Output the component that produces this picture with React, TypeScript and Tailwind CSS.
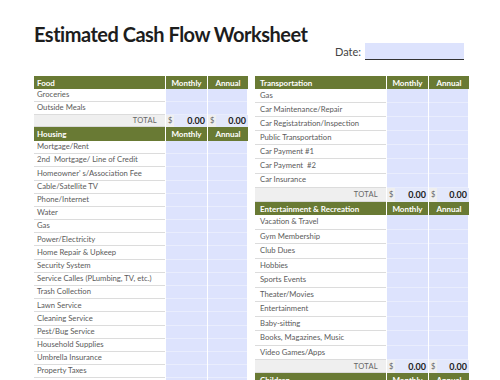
import React from "react";

type Row = { label?: string; total?: boolean; h: number };
type Section = { title: string; h: number; rows: Row[] };

const GREEN = "bg-[#697a34]";

const leftSections: Section[] = [
  {
    title: "Food",
    h: 13,
    rows: [
      { label: "Groceries", h: 13 },
      { label: "Outside Meals", h: 12.6 },
      { total: true, h: 12.8 },
    ],
  },
  {
    title: "Housing",
    h: 13.6,
    rows: [
      "Mortgage/Rent",
      "2nd  Mortgage/ Line of Credit",
      "Homeowner' s/Association Fee",
      "Cable/Satellite TV",
      "Phone/Internet",
      "Water",
      "Gas",
      "Power/Electricity",
      "Home Repair & Upkeep",
      "Security System",
      "Service Calles (PLumbing, TV, etc.)",
      "Trash Collection",
      "Lawn Service",
      "Cleaning Service",
      "Pest/Bug Service",
      "Household Supplies",
      "Umbrella Insurance",
      "Property Taxes",
      "",
    ].map((label) => ({ label, h: 13.2 })),
  },
];

const rightSections: Section[] = [
  {
    title: "Transportation",
    h: 13,
    rows: [
      ...[
        "Gas",
        "Car Maintenance/Repair",
        "Car Registatration/Inspection",
        "Public Transportation",
        "Car Payment #1",
        "Car Payment  #2",
        "Car Insurance",
      ].map((label) => ({ label, h: 14.1 })),
      { total: true, h: 14 },
    ],
  },
  {
    title: "Entertainment & Recreation",
    h: 13.8,
    rows: [
      ...[
        "Vacation & Travel",
        "Gym Membership",
        "Club Dues",
        "Hobbies",
        "Sports Events",
        "Theater/Movies",
        "Entertainment",
        "Baby-sitting",
        "Books, Magazines, Music",
        "Video Games/Apps",
      ].map((label) => ({ label, h: 14.5 })),
      { total: true, h: 13 },
    ],
  },
  { title: "Children", h: 14, rows: [] },
];

function TotalCell({ wide }: { wide: boolean }) {
  return (
    <div className={`${wide ? "w-[41px]" : "w-[40px]"} ml-[1px] flex items-center bg-[#efefef] h-full`}>
      <span className="pl-[2px] pr-[2px] text-[7.5px] text-[#666]">$</span>
      <span className="flex-1 h-full flex items-center justify-end pr-[2px] bg-[#e3e8fb] text-[9px] font-bold text-[#222]">
        0.00
      </span>
    </div>
  );
}

function Table({ sections, pad }: { sections: Section[]; pad: string }) {
  return (
    <div className="w-[214px] flex flex-col">
      {sections.map((s) => (
        <div key={s.title} className="flex flex-col">
          <div className="flex text-[8px] font-bold text-white" style={{ height: s.h }}>
            <div className={`w-[131px] ${GREEN} ${pad} flex items-center`}>{s.title}</div>
            <div className={`w-[41px] ml-[1px] ${GREEN} flex items-center justify-center`}>Monthly</div>
            <div className={`w-[40px] ml-[1px] ${GREEN} flex items-center justify-center`}>Annual</div>
          </div>
          {s.rows.map((r, i) =>
            r.total ? (
              <div key={i} className="flex" style={{ height: r.h }}>
                <div className="w-[131px] bg-[#efefef] border-b border-[#d9d9d9] flex items-center justify-end pr-[8px] text-[7.5px] tracking-[0.3px] text-[#666]">
                  TOTAL
                </div>
                <TotalCell wide />
                <TotalCell wide={false} />
              </div>
            ) : (
              <div key={i} className="flex" style={{ height: r.h }}>
                <div className={`w-[131px] border-b border-[#dcdcdc] ${pad} flex items-center whitespace-pre text-[7.7px] text-[#5b5b5b]`}>
                  {r.label}
                </div>
                <div className="w-[41px] ml-[1px] bg-[#dde3fd] border-b border-[#e9edfd]" />
                <div className="w-[39px] ml-[1px] bg-[#dde3fd] border-b border-[#e9edfd]" />
              </div>
            )
          )}
        </div>
      ))}
    </div>
  );
}

export default function App() {
  return (
    <div className="w-[500px] h-[380px] overflow-hidden bg-white font-['Lato','Liberation_Sans',sans-serif]">
      <h1 className="pl-[34px] pt-[22px] text-[20px] leading-[24px] font-bold tracking-[-0.5px] text-[#1d1d1d]">
        Estimated Cash Flow Worksheet
      </h1>
      <div className="flex justify-end items-end pr-[36px] -mt-[3px]">
        <span className="text-[11px] leading-[14px] text-[#444] mr-[4px] mb-[1px]">Date:</span>
        <div className="w-[99px] h-[17px] bg-[#dde3fd] border-b border-[#333]" />
      </div>
      <div className="flex gap-[7px] pl-[34px] mt-[16px]">
        <Table sections={leftSections} pad="pl-[3px]" />
        <Table sections={rightSections} pad="pl-[5px]" />
      </div>
    </div>
  );
}
